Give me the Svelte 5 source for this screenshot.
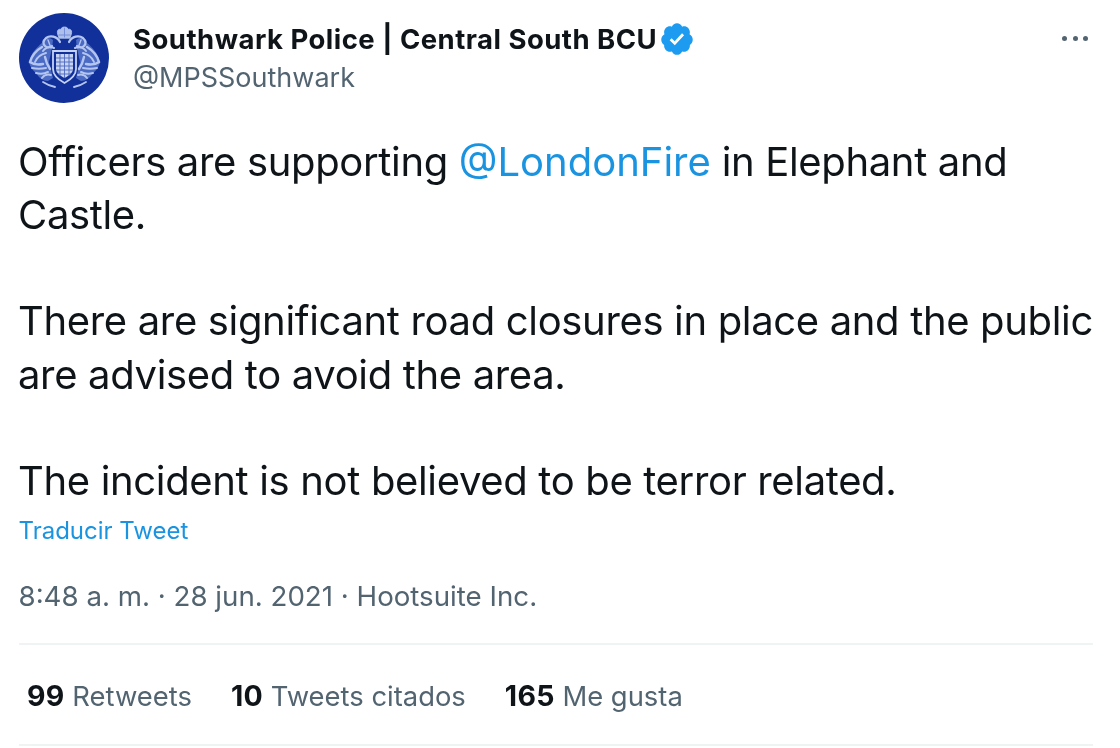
<script>
  const paragraphs = [
    [{ t: 'Officers are supporting ' }, { t: '@LondonFire', link: true }, { t: ' in Elephant and Castle.' }],
    [{ t: 'There are significant road closures in place and the public are advised to avoid the area.' }],
    [{ t: 'The incident is not believed to be terror related.' }]
  ];
  const stats = [
    { n: '99', l: 'Retweets' },
    { n: '10', l: 'Tweets citados' },
    { n: '165', l: 'Me gusta' }
  ];
</script>

<main class="tweet">
  <header class="head">
    <svg class="avatar" viewBox="0 0 90 90" aria-label="avatar">
      <circle cx="45" cy="45" r="45" fill="#11309a" />
      <g fill="#5f7ed2" opacity=".75">
        <path d="M34 27c-5-4-11-2-11 3-5 4-11 10-13 19 1 5 4 9 8 12 2 4 6 7 11 7l5-3-4-16 3-14z" />
        <path d="M57 27c5-4 11-2 11 3 5 4 11 10 13 19-1 5-4 9-8 12-2 4-6 7-11 7l-5-3 4-16-3-14z" />
      </g>
      <g fill="none" stroke="#b4c6f0" stroke-linecap="round" stroke-linejoin="round">
        <path d="M40 25c-1-3-2-5-1.500-7 1-2 2-2 3-1.500 1-2 2.500-2.500 4-2.500s3 .5 4 2.500c1-.5 2-.5 3 1.500.5 2-.5 4-1.500 7z" fill="#aebfec" stroke-width=".8" />
        <path d="M40 22h11M45.500 15v9" stroke="#6f89d6" stroke-width=".9" />
        <path d="M41 29c-3-6-10-7-14-4-3 3-3 6-1 8 2 2 5 2 7 0M50 29c3-6 10-7 14-4 3 3 3 6 1 8-2 2-5 2-7 0" stroke-width="2.200" />
        <path d="M35 35c-4-2-8-1-11 3M56 35c4-2 8-1 11 3" stroke-width="2" />
        <path d="M23 34c-5 3-10 8-12 15M68 34c5 3 10 8 12 15" stroke-width="2.400" />
        <path d="M27 40c-4 1-9 4-11 9M64 40c4 1 9 4 11 9" stroke-width="2" />
        <path d="M11 49c4 3 8 3 13 2M80 49c-4 3-8 3-13 2" stroke-width="2.400" />
        <path d="M13 55c5 1 9 1 14 0M78 55c-5 1-9 1-14 0" stroke-width="2" />
        <path d="M17 60c4 1 8 1 12-1M74 60c-4 1-8 1-12-1" stroke-width="2" />
        <path d="M23 65c2-3 6-4 9-3M68 65c-2-3-6-4-9-3" stroke-width="2" />
        <path d="M26 44c1 5 3 9 5 12M65 44c-1 5-3 9-5 12" stroke-width="2.400" />
        <path d="M24 69c3 2 7 4 12 5M67 69c-3 2-7 4-12 5" stroke-width="1.800" />
        <path d="M29 27l3 8M62 27l-3 8" stroke-width="1.400" />
      </g>
      <path d="M34 38h23v18c0 7-6 11-11.500 14-5.500-3-11.500-7-11.500-14z" fill="#11309a" stroke="#c6d3f3" stroke-width="1.800" />
      <path d="M37 41h17v15c0 4-4.500 7-8.500 9-4-2-8.500-5-8.500-9z" fill="#c8d4f3" />
      <path d="M41 41v22M45.500 41v24M50 41v22M37 45h17M37 49h17M37 53h17M37 57h17M39 61h13" stroke="#4d69bf" stroke-width=".9" fill="none" />
    </svg>
    <div class="who">
      <div class="name-row">
        <span class="name">Southwark Police | Central South BCU</span>
        <svg class="badge" viewBox="0 0 24 24" aria-label="verificada">
          <path fill="#1d9bf0" d="M22.5 12.5c0-1.58-.875-2.95-2.148-3.6.154-.435.238-.905.238-1.4 0-2.21-1.71-3.998-3.818-3.998-.47 0-.92.084-1.336.25C14.818 2.415 13.51 1.5 12 1.500s-2.816.917-3.437 2.250c-.415-.165-.866-.25-1.336-.25-2.110 0-3.818 1.790-3.818 4 0 .494.083.964.237 1.400-1.272.65-2.147 2.018-2.147 3.600 0 1.495.782 2.798 1.942 3.486-.02.17-.032.34-.032.514 0 2.210 1.708 4 3.818 4 .47 0 .92-.086 1.335-.25.62 1.334 1.926 2.250 3.437 2.250 1.512 0 2.818-.916 3.437-2.250.415.163.865.248 1.336.248 2.110 0 3.818-1.790 3.818-4 0-.174-.012-.344-.033-.513 1.158-.687 1.943-1.990 1.943-3.484z" />
          <path fill="#fff" d="M10.54 16.2l-3.44-3.45 1.3-1.3 2.06 2.07 4.9-5.33 1.35 1.24z" />
        </svg>
      </div>
      <div class="handle">@MPSSouthwark</div>
    </div>
    <div class="more" aria-label="más"><i></i><i></i><i></i></div>
  </header>

  <div class="body">
    {#each paragraphs as p}
      <p>{#each p as s}{#if s.link}<span class="link">{s.t}</span>{:else}{s.t}{/if}{/each}</p>
    {/each}
  </div>

  <div class="translate">Traducir Tweet</div>
  <div class="meta">8:48 a. m. · 28 jun. 2021 · Hootsuite Inc.</div>

  <div class="stats">
    {#each stats as s}
      <span class="stat"><b>{s.n}</b> {s.l}</span>
    {/each}
  </div>
</main>

<style>
  :global(body) {
    margin: 0;
    background: #fff;
  }
  .tweet {
    box-sizing: border-box;
    width: 1120px;
    height: 748px;
    overflow: hidden;
    padding: 13px 27px 0 19px;
    font-family: Inter, "Liberation Sans", sans-serif;
    color: #0f1419;
    background: #fff;
    filter: blur(0.35px);
  }
  .head {
    display: flex;
    align-items: flex-start;
    height: 90px;
  }
  .avatar {
    width: 90px;
    height: 90px;
    flex: none;
    filter: blur(0.4px);
  }
  .who {
    margin-left: 24px;
    padding-top: 8px;
    flex: 1;
  }
  .name-row {
    display: flex;
    align-items: center;
    height: 36px;
  }
  .name {
    font-size: 27.5px;
    font-weight: 700;
    letter-spacing: 0.48px;
  }
  .badge {
    width: 36px;
    height: 36px;
    margin-left: 2px;
  }
  .handle {
    font-size: 27px;
    line-height: 36px;
    color: #536471;
    margin-top: 3px;
  }
  .more {
    display: flex;
    gap: 5.5px;
    margin-top: 23px;
    margin-right: 5px;
  }
  .more i {
    width: 5px;
    height: 5px;
    border-radius: 50%;
    background: #536471;
  }
  .body {
    margin-top: 31.500px;
    margin-left: -1px;
    width: 1075px;
    font-size: 40px;
    line-height: 53.3px;
    letter-spacing: -0.34px;
  }
  .body p {
    margin: 0 0 53.3px;
  }
  .body p:last-child {
    margin-bottom: 0;
  }
  .link {
    color: #1a94e0;
    letter-spacing: 0;
  }
  .translate {
    margin-top: 5px;
    margin-left: -0.5px;
    font-size: 24px;
    line-height: 36px;
    color: #1a94e0;
  }
  .meta {
    margin-top: 29.500px;
    margin-left: -0.5px;
    font-size: 27.7px;
    line-height: 36px;
    color: #536471;
  }
  .stats {
    display: flex;
    gap: 39px;
    margin-top: 29px;
    padding: 33px 8px 30px;
    border-top: 2px solid #eff3f4;
    border-bottom: 2px solid #eff3f4;
    font-size: 27.4px;
    line-height: 36px;
    color: #536471;
  }
  .stat b {
    color: #0f1419;
    font-weight: 700;
    font-size: 28.5px;
    letter-spacing: 0.3px;
  }
</style>
